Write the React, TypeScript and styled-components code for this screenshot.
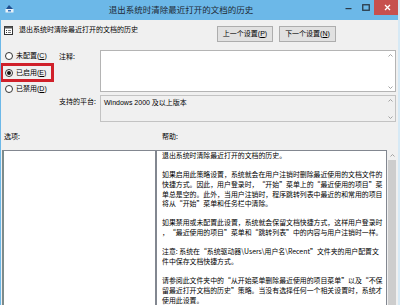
import React from "react";
import styled, { createGlobalStyle } from "styled-components";

const Global = createGlobalStyle`
  html, body { margin: 0; padding: 0; background: #f0f0f0; }
  body {
    font-family: "Noto Sans CJK SC", "Noto Sans", sans-serif;
    text-autospace: no-autospace;
    text-spacing-trim: space-all;
  }
  * { box-sizing: border-box; }
`;

const latinFirst = `"Liberation Sans", "Noto Sans CJK SC", sans-serif`;

const Window = styled.div`
  width: 400px;
  height: 305px;
  overflow: hidden;
  background: #f0f0f0;
  border-left: 1px solid #6cb8e8;
  border-right: 2px solid #d6e9f5;
  display: flex;
  flex-direction: column;
  color: #000;
`;

const TitleBar = styled.div`
  height: 20px;
  flex: none;
  background: #6cb8e8;
  display: flex;
  align-items: flex-start;
`;

const TitleIcon = styled.svg`
  width: 9px;
  height: 9px;
  margin: 4px 0 0 4px;
`;

const TitleText = styled.div`
  flex: 1;
  text-align: center;
  font-size: 8.5px;
  line-height: 18px;
  color: #1e2a35;
  padding-left: 8px;
`;

const Controls = styled.div`
  display: flex;
  align-items: flex-start;
  height: 15px;
  margin-right: -2px;
`;

const Ctl = styled.div<{ $w: number }>`
  width: ${(p) => p.$w}px;
  height: 15px;
  display: flex;
  align-items: center;
  justify-content: center;
`;

const CloseBtn = styled(Ctl)`
  background: #c7504e;
`;

const Body = styled.div`
  flex: 1;
  display: flex;
  flex-direction: column;
  padding: 0 1px 0 1px;
  min-height: 0;
`;

const Header = styled.div`
  height: 28px;
  flex: none;
  display: flex;
  align-items: flex-start;
  padding-top: 4px;
`;

const HeaderIcon = styled.svg`
  width: 9px;
  height: 9px;
  margin: 2px 0 0 2px;
  flex: none;
`;

const HeaderText = styled.div`
  font-size: 7px;
  line-height: 10px;
  margin-left: 6px;
  white-space: nowrap;
`;

const ButtonGroup = styled.div`
  margin-left: auto;
  margin-right: 61px;
  margin-top: 2px;
  display: flex;
  gap: 6px;
`;

const NavButton = styled.div<{ $w: number }>`
  width: ${(p) => p.$w}px;
  height: 16px;
  background: #e1e1e1;
  border: 1px solid #adadad;
  font-family: ${latinFirst};
  font-size: 7px;
  line-height: 14px;
  text-align: center;
  white-space: nowrap;
`;

const Mnemonic = styled.span`
  text-decoration: underline;
  text-underline-offset: 1px;
`;

const Mid = styled.div`
  flex: none;
  height: 74px;
  display: flex;
`;

const RadioColumn = styled.div`
  width: 56px;
  flex: none;
  display: flex;
  flex-direction: column;
  gap: 3.5px;
  padding: 1.5px 0 0 1px;
`;

const RadioRow = styled.div<{ $marked?: boolean }>`
  width: 48px;
  height: 13px;
  display: flex;
  align-items: center;
  gap: 3px;
  padding-left: 2px;
  outline: ${(p) => (p.$marked ? "3px solid #d0202a" : "none")};
`;

const RadioLabel = styled.span`
  font-family: ${latinFirst};
  font-size: 7px;
  line-height: 10px;
  white-space: nowrap;
`;

const RadioCircle = styled.span<{ $checked?: boolean }>`
  width: 8px;
  height: 8px;
  border-radius: 50%;
  border: 1px solid #333;
  background: #fff;
  flex: none;
  display: flex;
  align-items: center;
  justify-content: center;
  &::after {
    content: "";
    width: 4px;
    height: 4px;
    border-radius: 50%;
    background: ${(p) => (p.$checked ? "#111" : "transparent")};
  }
`;

const Fields = styled.div`
  flex: 1;
  display: grid;
  grid-template-columns: 42px 1fr;
  grid-template-rows: 42px 27px;
  row-gap: 3px;
  padding: 2px 1px 0 0;
`;

const FieldLabel = styled.div<{ $top: number }>`
  font-size: 7px;
  line-height: 10px;
  padding-top: ${(p) => p.$top}px;
  white-space: nowrap;
  margin-left: 1px;
`;

const FieldBox = styled.div<{ $gray?: boolean }>`
  border: 1px solid ${(p) => (p.$gray ? "#c3c3c3" : "#b4b4b4")};
  background: ${(p) => (p.$gray ? "#f0f0f0" : "#fff")};
  display: flex;
  min-width: 0;
`;

const FieldContent = styled.div`
  flex: 1;
  font-family: ${latinFirst};
  font-size: 7px;
  line-height: 10px;
  padding: 2px 0 0 3px;
  white-space: nowrap;
`;

const MiniScroll = styled.div`
  width: 10px;
  display: flex;
  flex-direction: column;
  justify-content: space-between;
  align-items: center;
  padding: 3px 0 2px;
`;

const LabelsRow = styled.div`
  height: 28px;
  flex: none;
  display: flex;
  align-items: center;
  font-size: 7px;
  line-height: 10px;
`;

const OptionsLabel = styled.div`
  width: 160px;
  padding-left: 2px;
`;

const Panels = styled.div`
  flex: 1;
  display: flex;
  min-height: 0;
`;

const OptionsPanel = styled.div`
  width: 154px;
  flex: none;
  background: #fff;
  border: 1px solid #828790;
  border-left: 2px solid #7d8c8c;
  border-bottom: none;
`;

const HelpPanel = styled.div`
  flex: 1;
  display: flex;
  min-width: 0;
`;

const HelpText = styled.div`
  flex: 1;
  background: #fff;
  border: 1px solid #828790;
  border-bottom: none;
  padding: 0 0 0 5px;
  font-size: 6.9px;
  line-height: 9.65px;
  overflow: hidden;
  white-space: nowrap;
`;

const HelpLine = styled.div`
  height: 9.65px;
`;

const Quote = styled.span`
  font-feature-settings: "fwid" 1;
`;

const Scrollbar = styled.div`
  width: 10px;
  flex: none;
  background: #f0f0f0;
  display: flex;
  flex-direction: column;
  align-items: center;
`;

const ScrollArrow = styled.div`
  height: 10px;
  display: flex;
  align-items: center;
  justify-content: center;
`;

const Thumb = styled.div`
  width: 8px;
  flex: 1;
  background: #cdcdcd;
`;

const Chevron = ({ down }: { down?: boolean }) => (
  <svg width="5" height="3" viewBox="0 0 5 3">
    <path
      d={down ? "M0.5 0.5 L2.5 2.5 L4.5 0.5" : "M0.5 2.5 L2.5 0.5 L4.5 2.5"}
      fill="none"
      stroke="#9a9a9a"
      strokeWidth="0.9"
    />
  </svg>
);

const helpLines = [
  "退出系统时清除最近打开的文档的历史。",
  "",
  "如果启用此策略设置，系统就会在用户注销时删除最近使用的文档文件的",
  "快捷方式。因此，用户登录时，“开始”菜单上的“最近使用的项目”菜",
  "单总是空的。此外，当用户注销时，程序跳转列表中最近的和常用的项目",
  "将从“开始”菜单和任务栏中清除。",
  "",
  "如果禁用或未配置此设置，系统就会保留文档快捷方式，这样用户登录时",
  "，“最近使用的项目”菜单和“跳转列表”中的内容与用户注销时一样。",
  "",
  "注意: 系统在“系统驱动器\\Users\\用户名\\Recent”文件夹的用户配置文",
  "件中保存文档快捷方式。",
  "",
  "请参阅此文件夹中的“从开始菜单删除最近使用的项目菜单”以及“不保",
  "留最近打开文档的历史”策略。当没有选择任何一个相关设置时，系统才",
  "使用此设置。",
];

const renderLine = (s: string) =>
  s.split(/([“”])/).map((part, i) =>
    part === "“" || part === "”" ? (
      <Quote key={i}>{part}</Quote>
    ) : (
      <React.Fragment key={i}>{part}</React.Fragment>
    )
  );

const radios = [
  { text: "未配置", key: "C" },
  { text: "已启用", key: "E", checked: true },
  { text: "已禁用", key: "D" },
];

export default function App() {
  return (
    <>
      <Global />
      <Window lang="zh-CN">
        <TitleBar>
          <TitleIcon viewBox="0 0 9 9">
            <rect x="0.5" y="5" width="8" height="3.5" fill="#e8f1f8" />
            <path d="M1 5 L4 1 L6.5 3.5 L8 5 Z" fill="#1f4f8f" />
            <rect x="3" y="6" width="3" height="1.5" fill="#3a78c2" />
          </TitleIcon>
          <TitleText>退出系统时清除最近打开的文档的历史</TitleText>
          <Controls>
            <Ctl $w={17}>
              <svg width="7" height="7" viewBox="0 0 7 7">
                <rect x="0.5" y="4" width="6" height="1.2" fill="#2b3a48" />
              </svg>
            </Ctl>
            <Ctl $w={17}>
              <svg width="8" height="7" viewBox="0 0 8 7">
                <rect x="0.75" y="0.75" width="6.5" height="5.5" fill="none" stroke="#2b3a48" strokeWidth="1.3" />
              </svg>
            </Ctl>
            <CloseBtn $w={26}>
              <svg width="7" height="7" viewBox="0 0 7 7">
                <path d="M1 1 L6 6 M6 1 L1 6" stroke="#fff" strokeWidth="1.3" />
              </svg>
            </CloseBtn>
          </Controls>
        </TitleBar>
        <Body>
          <Header>
            <HeaderIcon viewBox="0 0 9 9">
              <rect x="0.5" y="0.5" width="8" height="8" fill="#fff" stroke="#333" />
              <rect x="0.5" y="0.5" width="8" height="2" fill="#555" />
              <rect x="2" y="4" width="1" height="1" fill="#333" />
              <rect x="4" y="4" width="3" height="1" fill="#777" />
              <rect x="2" y="6" width="1" height="1" fill="#333" />
              <rect x="4" y="6" width="3" height="1" fill="#777" />
            </HeaderIcon>
            <HeaderText>退出系统时清除最近打开的文档的历史</HeaderText>
            <ButtonGroup>
              <NavButton $w={56}>
                上一个设置(<Mnemonic>P</Mnemonic>)
              </NavButton>
              <NavButton $w={57}>
                下一个设置(<Mnemonic>N</Mnemonic>)
              </NavButton>
            </ButtonGroup>
          </Header>
          <Mid>
            <RadioColumn>
              {radios.map((r) => (
                <RadioRow key={r.key} $marked={r.checked}>
                  <RadioCircle $checked={r.checked} />
                  <RadioLabel>
                    {r.text}(<Mnemonic>{r.key}</Mnemonic>)
                  </RadioLabel>
                </RadioRow>
              ))}
            </RadioColumn>
            <Fields>
              <FieldLabel $top={1}>注释:</FieldLabel>
              <FieldBox>
                <FieldContent />
                <MiniScroll>
                  <Chevron />
                  <Chevron down />
                </MiniScroll>
              </FieldBox>
              <FieldLabel $top={1}>支持的平台:</FieldLabel>
              <FieldBox $gray>
                <FieldContent>Windows 2000 及以上版本</FieldContent>
                <MiniScroll>
                  <Chevron />
                  <Chevron down />
                </MiniScroll>
              </FieldBox>
            </Fields>
          </Mid>
          <LabelsRow>
            <OptionsLabel>选项:</OptionsLabel>
            <div>帮助:</div>
          </LabelsRow>
          <Panels>
            <OptionsPanel />
            <HelpPanel>
              <HelpText>
                {helpLines.map((l, i) => (
                  <HelpLine key={i}>{l ? renderLine(l) : "\u00a0"}</HelpLine>
                ))}
              </HelpText>
              <Scrollbar>
                <ScrollArrow>
                  <Chevron />
                </ScrollArrow>
                <Thumb />
              </Scrollbar>
            </HelpPanel>
          </Panels>
        </Body>
      </Window>
    </>
  );
}
